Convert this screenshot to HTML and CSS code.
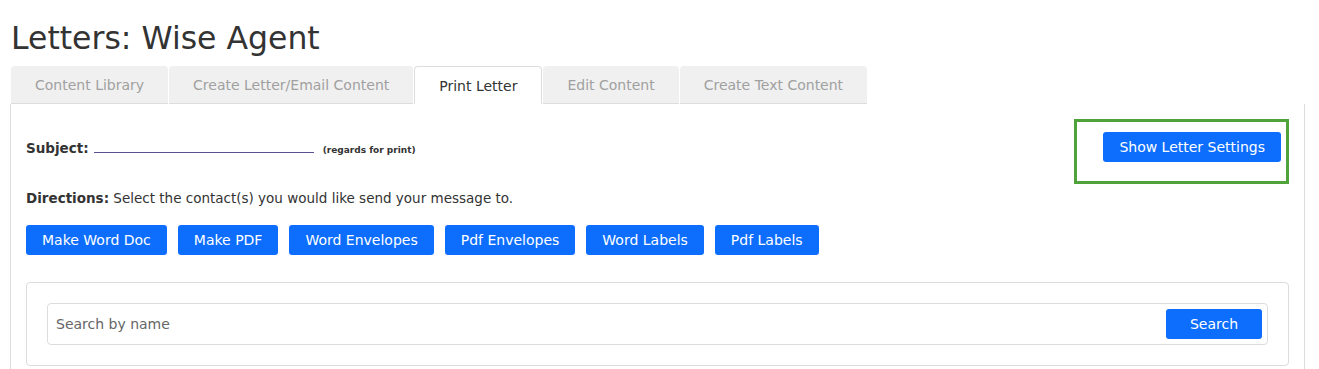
FILE: index.html
```html
<!DOCTYPE html>
<html lang="en">
<head>
  <meta charset="UTF-8" />
  <title>Letters: Wise Agent</title>
  <link rel="stylesheet" href="styles.css">
</head>
<body>

  <h1 class="page-title">Letters: Wise Agent</h1>

  <ul class="tabs">
    <li class="tab">Content Library</li>
    <li class="tab">Create Letter/Email Content</li>
    <li class="tab active">Print Letter</li>
    <li class="tab">Edit Content</li>
    <li class="tab">Create Text Content</li>
  </ul>

  <div class="panel">
    <div class="top-row">
      <div class="subject">
        <label>Subject:</label>
        <span class="subject-line"></span>
        <small>(regards for print)</small>
      </div>
      <div class="settings-box">
        <button class="btn">Show Letter Settings</button>
      </div>
    </div>

    <p class="directions"><strong>Directions:</strong> Select the contact(s) you would like send your message to.</p>

    <div class="actions">
      <button class="btn">Make Word Doc</button>
      <button class="btn">Make PDF</button>
      <button class="btn">Word Envelopes</button>
      <button class="btn">Pdf Envelopes</button>
      <button class="btn">Word Labels</button>
      <button class="btn">Pdf Labels</button>
    </div>

    <div class="search-card">
      <div class="search-field">
        <span class="placeholder">Search by name</span>
        <button class="btn search-btn">Search</button>
      </div>
    </div>
  </div>

</body>
</html>
```

FILE: styles.css
```css
* {
  margin: 0;
  padding: 0;
  box-sizing: border-box;
  font-family: "DejaVu Sans", sans-serif;
}
body {
  background: #fff;
  color: #333;
  padding: 0 14px 0 10px;
  height: 369px;
  overflow: hidden;
}
.page-title {
  font-weight: normal;
  font-size: 31.5px;
  color: #333;
  padding: 20px 0 0 1px;
  height: 66px;
}
.tabs {
  list-style: none;
  display: flex;
  height: 38px;
  padding-left: 1px;
}
.tab {
  background: #f0f0f0;
  color: #a0a0a0;
  font-size: 14px;
  padding: 0 24px;
  display: flex;
  align-items: center;
  border-radius: 4px 4px 0 0;
  border-bottom: 1px solid #ddd;
  margin-right: 1px;
}
.tab.active {
  background: #fff;
  color: #333;
  border: 1px solid #ddd;
  border-bottom: none;
}
.panel {
  border: 1px solid #ddd;
  border-top: none;
  padding: 15px 15px 0 15px;
  height: 300px;
}
.top-row {
  display: flex;
  justify-content: space-between;
  align-items: flex-start;
}
.subject {
  display: flex;
  align-items: baseline;
  padding-top: 21px;
  font-size: 13.5px;
}
.subject label {
  font-weight: bold;
  margin-right: 5px;
}
.subject-line {
  display: inline-block;
  width: 220px;
  border-bottom: 1px solid #5b4f8f;
  margin-right: 9px;
}
.subject small {
  font-size: 9px;
  font-weight: bold;
}
.settings-box {
  border: 3px solid #4fa33a;
  padding: 10px 5px 19px 26px;
}
.btn {
  background: #0d6efd;
  color: #fff;
  border: none;
  border-radius: 3px;
  font-size: 14px;
  padding: 0 16px;
  height: 30px;
  cursor: pointer;
}
.directions {
  font-size: 13.5px;
  margin-top: 6px;
}
.actions {
  display: flex;
  gap: 11px;
  margin-top: 19px;
}
.search-card {
  margin-top: 27px;
  border: 1px solid #ddd;
  border-radius: 4px;
  padding: 20px 20px 20px 20px;
  height: 84px;
}
.search-field {
  border: 1px solid #ddd;
  border-radius: 4px;
  height: 42px;
  display: flex;
  align-items: center;
  justify-content: space-between;
  padding: 0 5px 0 8px;
}
.placeholder {
  color: #666;
  font-size: 14px;
}
.search-btn {
  width: 96px;
  padding: 0;
}
```
